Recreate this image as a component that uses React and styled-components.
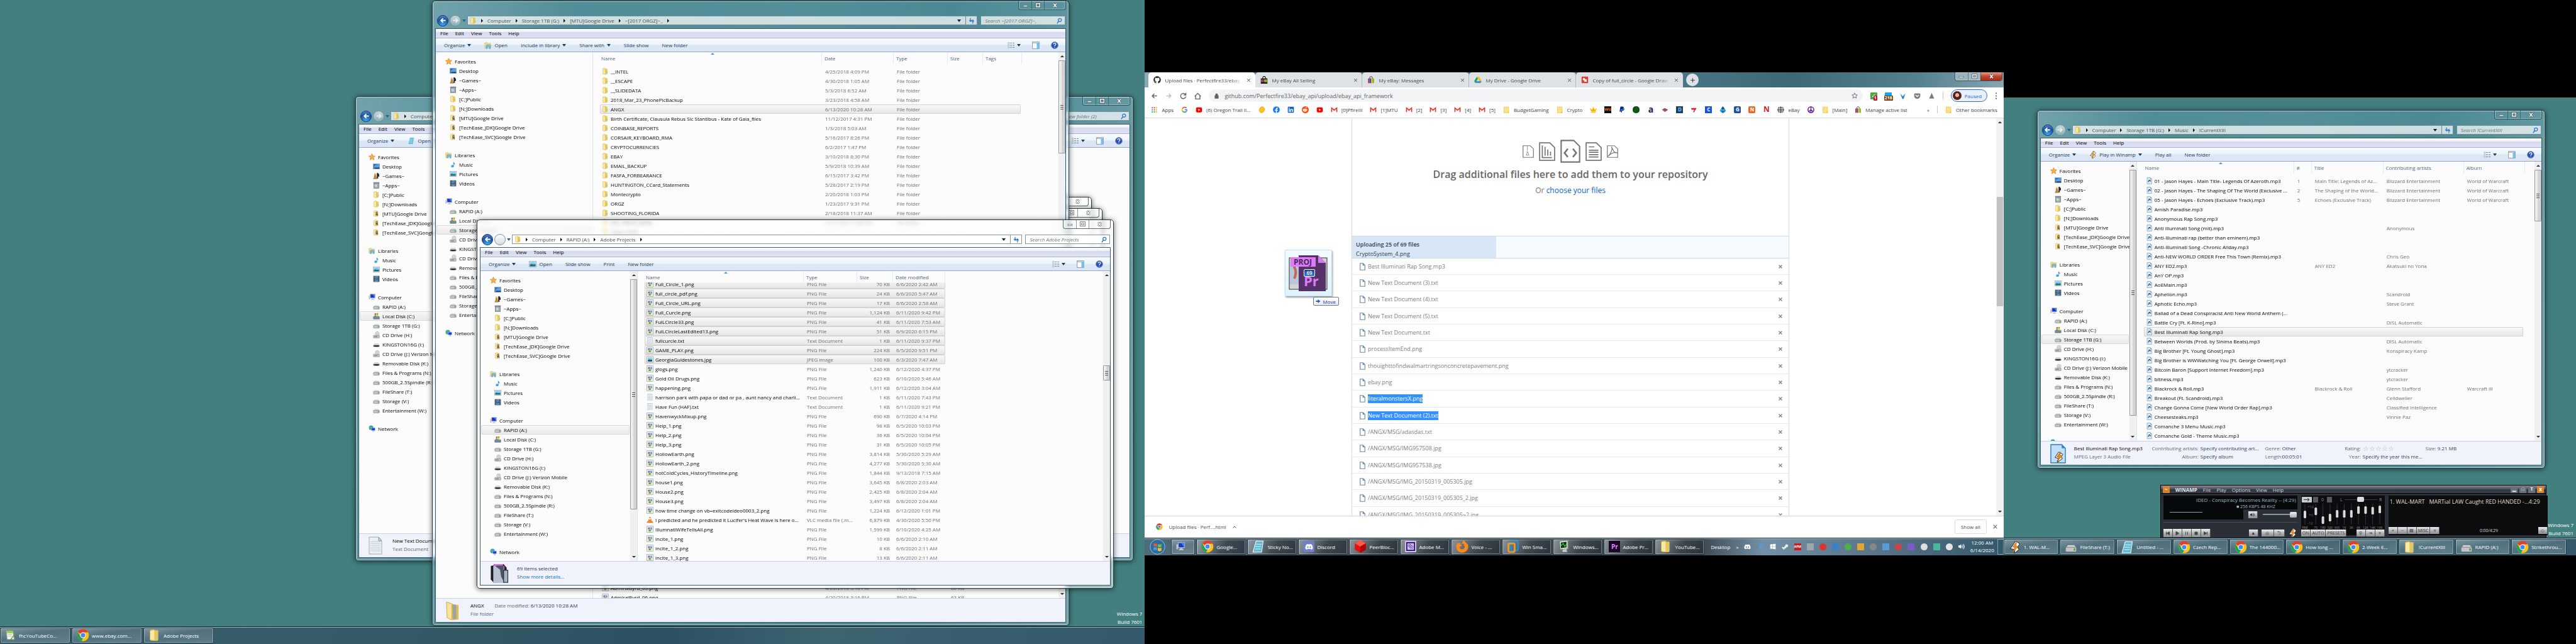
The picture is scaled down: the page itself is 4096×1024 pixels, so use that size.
import React from "react";
import styled, { createGlobalStyle, css } from "styled-components";
import {
  FaGithub, FaFacebook, FaLinkedin, FaRedditAlien, FaPaypal, FaDiscord, FaFirefoxBrowser,
  FaSteamSymbol, FaBluetoothB, FaGlobe, FaCrown, FaPeace, FaVolumeUp, FaGetPocket, FaWindows,
} from "react-icons/fa";

const Global = createGlobalStyle`
  *, *::before, *::after { box-sizing: border-box; }
  body { margin: 0; background: #000; font-family: "Open Sans", "Noto Sans", sans-serif; font-size: 8px; line-height: 15px; color: #000; overflow: hidden; }
  button, input { font: inherit; color: inherit; border: 0; padding: 0; margin: 0; background: none; }
  ul, ol, p, h1, h2, dl, dd { margin: 0; padding: 0; list-style: none; font-weight: inherit; font-size: inherit; }
  a { text-decoration: none; color: inherit; }
  svg { display: block; flex: none; }
`;

/* ---------- desktop ---------- */

const Screens = styled.main`
  display: grid;
  grid-template-columns: 4fr 3fr 2fr;
  align-items: start;
`;
const Screen = styled.section`
  position: relative;
  display: flex;
  flex-direction: column;
  justify-content: flex-end;
  aspect-ratio: ${(p) => p.$ratio};
  margin-top: ${(p) => p.$drop || 0}px;
  background: ${(p) => p.$bg || "#437f7f"};
  overflow: hidden;
`;
const BuildNote = styled.p`
  padding: 0 4px 1px;
  text-align: right;
  color: #fff;
  line-height: 13px;
  white-space: pre-line;
`;

/* ---------- icons ---------- */

const Svg = ({ w = 11, h = 11, vb = "0 0 16 16", children, ...r }) => (
  <svg width={w} height={h} viewBox={vb} aria-hidden="true" {...r}>{children}</svg>
);
const art = {
  folder: <><path d="M3 1l4-.5V2h5v13H3z" fill="#e9cf6a" /><path d="M2 2l6-1v14l-6-1z" fill="#f8e9a3" stroke="#c9a740" strokeWidth=".6" /><path d="M8 2h4.500v12L8 15z" fill="#e5c65c" /><path d="M12.500 8v4" stroke="#5aa9e6" /></>,
  drivefolder: <><path d="M2 2l6-1v14l-6-1z" fill="#f6e59b" stroke="#c9a740" strokeWidth=".6" /><path d="M8 2h4v12l-4 1z" fill="#dfc05a" /><path d="M6 5l4-1 2 10-3-3-2 3z" fill="#555" /><circle cx="8" cy="7" r="1.500" fill="#caa" /></>,
  star: <path d="M8 .8l2.100 4.900 5.200.4-4 3.400 1.300 5.300L8 12l-4.600 2.800 1.300-5.300-4-3.400 5.200-.4z" fill="#fdb03a" stroke="#d9741c" />,
  desktop: <><rect x=".5" y="2" width="15" height="12" fill="#2c6fc4" stroke="#9db4c9" /><path d="M1 11C5 4 10 3 15 3v8z" fill="#5d9fe0" /><rect x="1" y="11" width="14" height="2.500" fill="#1d3d66" /><circle cx="3" cy="12" r="1" fill="#ffb43c" /></>,
  games: <><path d="M11 1c4 3 4 5 3.500 8-1 2-2.500 1-3 1l1 4H9V2z" fill="#2a2a2a" /><circle cx="5" cy="4" r="2.200" fill="#e8b765" /><path d="M3.500 6h3l1 5 2 4H1l2-4z" fill="#c48a35" stroke="#6d4813" strokeWidth=".6" /></>,
  apps: <><rect x="2" y="3" width="12" height="12" fill="#a9adb5" stroke="#666" /><rect x="1" y="1" width="14" height="2.500" fill="#7e80ad" /><circle cx="7" cy="9" r="3.300" fill="#e7e9e7" stroke="#6a9" /><circle cx="7" cy="9" r="1" fill="#7c8" /></>,
  library: <><path d="M1 3l5-1 1 2h7v10H1z" fill="#f3dc8a" stroke="#c9a740" strokeWidth=".6" /><path d="M4 15V8.500Q4 7 5.500 7h6Q13 7 13 8.500V15h-2.500v-4h-4v4z" fill="#6cc3ee" stroke="#2d87bd" strokeWidth=".6" /></>,
  music: <><path d="M8.500 1c.5 3 5 4 3.500 8-.5-2-2-3-2.500-3v6h-1z" fill="#2d86d6" /><ellipse cx="6.500" cy="12" rx="3.200" ry="2.900" fill="#3fa3ea" /></>,
  picture: <><rect x=".5" y="2" width="15" height="12" fill="#fff" stroke="#8e9aa6" /><rect x="2" y="3.500" width="12" height="9" fill="#7cc8f0" /><path d="M2 9c4-3 6 1 12-1v4.500H2z" fill="#1c6e72" /></>,
  video: <><rect x="1" y="1" width="14" height="14" fill="#2c3640" /><rect x="4" y="1.500" width="8" height="6" fill="#3c9be0" /><rect x="4" y="8.500" width="8" height="6" fill="#3c9be0" /><path d="M5 3l6 3M5 12l6-3" stroke="#b5472f" strokeWidth="1.500" /><path d="M2.500 1v14M13.500 1v14" stroke="#dde" strokeDasharray="1.500 1.500" /></>,
  computer: <><rect x="4" y="1" width="11" height="9" fill="#1338c8" stroke="#b8bcc4" strokeWidth="1.400" /><path d="M9 1.500h5.500v8z" fill="#4f7bf0" /><rect x=".5" y="4" width="3" height="9" fill="#bfc4cc" /><path d="M7 11h5v2h2v1.500H5V13h2z" fill="#c9cdd4" /></>,
  drive: <><path d="M2 8l2-2.500h8L14.500 8z" fill="#e4e4e6" stroke="#999" strokeWidth=".5" /><rect x="1" y="8" width="14" height="6" rx="1.500" fill="#c3c4c9" stroke="#77787d" strokeWidth=".8" /><rect x="11.500" y="9.500" width="2" height="3" fill="#3aa83c" /></>,
  windrive: <><rect x="1" y="9" width="14" height="6" rx="1" fill="#6f8f93" stroke="#46595c" strokeWidth=".7" /><path d="M4 2l3.500-1v4L3.500 6z" fill="#e5562c" /><path d="M8.500 1.500L12 1v4l-3.500.5z" fill="#7ab51d" /><path d="M3.500 7l4-1v3h-4z" fill="#2a8dd4" /><path d="M8.500 6H12v3H8.500z" fill="#fbb911" /></>,
  cd: <><circle cx="10" cy="5" r="4.500" fill="#dfe1e6" stroke="#8b8d93" strokeWidth=".7" /><circle cx="10" cy="5" r="1.200" fill="#fff" stroke="#888" strokeWidth=".6" /><rect x="1" y="9" width="14" height="6" rx="1" fill="#c3c4c9" stroke="#77787d" strokeWidth=".8" /><path d="M3 12h7" stroke="#444" /></>,
  usb: <><path d="M3 6h10l2 4H1z" fill="#cfd1d4" /><path d="M1 10h14v3.500H1z" fill="#4a4b4e" /><rect x="4" y="11" width="8" height="2.500" fill="#222" /></>,
  network: <><circle cx="6" cy="6" r="5.200" fill="#2f9bd6" /><path d="M3 3c3-2 5 0 4 2s-4 1-4 4c-2-2-2-5 0-6z" fill="#57b947" /><rect x="7" y="6" width="8" height="6.500" fill="#1c3fce" stroke="#b8c4da" /><path d="M9 14.500h4.500M11 12.500v2" stroke="#8b94a5" /></>,
  png: <><rect x="1" y="1" width="14" height="14" fill="#fff" stroke="#8b8f94" /><rect x="3" y="3" width="10" height="10" fill="#8fc5f0" /><rect x="3" y="9" width="10" height="4" fill="#f0e6a0" /><path d="M5 13c0-4 2-6 5-3v3z" fill="#4fae43" /><circle cx="5.500" cy="6" r="1.800" fill="#e0502e" /><rect x="10" y="5" width="3" height="3.500" fill="#8f86cf" /></>,
  jpg: <><rect x="1" y="1" width="14" height="14" fill="#fff" stroke="#8b8f94" /><rect x="3" y="3" width="10" height="10" fill="#8fd0f5" /><path d="M3 10c3-4 5 0 10-2v5H3z" fill="#1c5f7c" /></>,
  txt: <><path d="M2.500 1h11v14h-11z" fill="#fbfcfd" stroke="#a5abb2" strokeWidth=".8" /><path d="M4 5h8M4 7.500h8M4 10h8M4 12.500h8" stroke="#8eaac0" strokeWidth=".8" /><path d="M3 1.500h10" stroke="#8b9299" strokeDasharray="1 1" /></>,
  vlc: <><path d="M7 1h2l4 11H3z" fill="#f58a1f" /><path d="M6 4.500h4l1 2.500H5z" fill="#fff" /><path d="M1.500 12h13l1 3H.5z" fill="#e3700e" /></>,
  mp3: <><path d="M3 .8h7.500L13.500 4v11.200H3z" fill="#d9edfb" stroke="#5f90b8" strokeWidth=".9" /><path d="M10.500 1v3h3z" fill="#2f84cf" /><path d="M5 10h2V6.500h3V9h1.500" fill="none" stroke="#1a1a1a" strokeWidth="1.300" /></>,
  winamp: <><path d="M9 0l5 4-3 4 2 3-6 5 1-5-6-1z" fill="#fff" stroke="#222" strokeWidth=".8" /><path d="M10 1L5 8h3l-3 7 7-8H9z" fill="#f7941d" stroke="#b65b06" strokeWidth=".6" /></>,
  chrome: <><circle cx="8" cy="8" r="7.500" fill="#fbc116" /><path d="M8 8L1.500 4.200A7.500 7.500 0 0 1 14.500 4.300L8 4.300z" fill="#e33b2e" /><path d="M1.500 4.200L5 10l3 2-2 3.300A7.500 7.500 0 0 1 1.500 4.200z" fill="#1ea362" /><circle cx="8" cy="8" r="3.600" fill="#fff" /><circle cx="8" cy="8" r="2.800" fill="#4587f3" /></>,
  google: <><path d="M3 5.500A5.800 5.800 0 0 1 12.500 4" fill="none" stroke="#ea4335" strokeWidth="2.400" /><path d="M3 5.500a5.800 5.800 0 0 0 .1 5.200" fill="none" stroke="#fbbc05" strokeWidth="2.400" /><path d="M3.100 10.700A5.800 5.800 0 0 0 12 12.200" fill="none" stroke="#34a853" strokeWidth="2.400" /><path d="M8.200 8.100h5.200c0 2-.5 3.100-1.600 4.200" fill="none" stroke="#4285f4" strokeWidth="2.300" /></>,
  ebay: <><path d="M5 6V4a3 3 0 0 1 6 0v2" fill="none" stroke="#333" strokeWidth="1.200" /><rect x="1.500" y="5" width="3.300" height="10" fill="#e53238" /><rect x="4.800" y="5" width="3.300" height="10" fill="#0064d2" /><rect x="8" y="5" width="3.300" height="10" fill="#f5af02" /><rect x="11.300" y="5" width="3.200" height="10" fill="#86b817" /></>,
  ebayblack: <><path d="M5 6V3.500a3 3 0 0 1 6 0V6" fill="none" stroke="#111" strokeWidth="1.400" /><rect x="1" y="5" width="14" height="11" fill="#111" /><path d="M1.500 7h4v6h-4z" fill="#e53238" /><path d="M5.500 7h3v6h-3z" fill="#0064d2" /><path d="M8.500 7h3v6h-3z" fill="#f5af02" /><path d="M11.500 7h3v6h-3z" fill="#86b817" /></>,
  gdrive: <><path d="M5.500 1.500h5L16 10.500h-5z" fill="#fbbc05" /><path d="M5.500 1.500L8 6 2.700 14.800 0 10.500z" fill="#1da462" /><path d="M5 10.500h11l-2.600 4.300H2.700z" fill="#4688f4" /></>,
  drawing: <><rect x="1" y="1" width="14" height="14" rx="1.500" fill="#db4437" /><circle cx="6" cy="6.500" r="2.400" fill="#fff" /><rect x="7" y="7" width="5" height="5" fill="#fff" /></>,
  gmail: <><rect x="1" y="3" width="14" height="10.500" fill="#eee" /><path d="M2 13.500V3.800l6 5.200 6-5.200v9.700" fill="none" stroke="#d93a2b" strokeWidth="2.200" /></>,
  bookfolder: <><rect x="2" y="1.500" width="11" height="13.500" fill="#fbe08a" stroke="#eac54f" /><path d="M13 11v4h-3" fill="#e9b92c" /></>,
  youtube: <><rect x="1" y="2.500" width="14" height="11.500" rx="3" fill="#f00" /><path d="M6.500 5.500l4 2.700-4 2.700z" fill="#fff" /></>,
  gold: <ellipse cx="8" cy="8" rx="6" ry="7" fill="#fcc419" stroke="#e59b0a" transform="rotate(25 8 8)" />,
  apps9: <g>{[2, 6.800, 11.600].map((y, j) => [2, 6.800, 11.600].map((x, i) => <rect key={x + "-" + y} x={x} y={y} width="2.800" height="2.800" fill={["#ea4335", "#ea4335", "#fbbc05", "#34a853", "#4285f4", "#fbbc05", "#34a853", "#34a853", "#fbbc05"][j * 3 + i]} />))}</g>,
  diamond: <><path d="M8 0l4 5-4 4-4-4z" fill="#1a4f9c" /><path d="M4 5l4 5-4 4-3-4zM12 5l3 5-3 4-4-4z" fill="#17a7e0" /><path d="M8 9l4 4-4 3-4-3z" fill="#0d6fb8" /></>,
  flag: <><path d="M1 8l6-4 8 4-7 5z" fill="#d63a3a" /><path d="M2 8l6-3 3 2-6 4z" fill="#3c6fc4" /></>,
  seven: <path d="M2 4h12L8 14l-2-1 3-5H2z" fill="#d8232a" />,
  gem: <><path d="M8 0l7 4v8l-7 4-7-4V4z" fill="#e0140f" /><path d="M8 0l7 4-7 4-7-4z" fill="#ff5a4c" /><path d="M8 8v8l7-4V4z" fill="#a80a08" /></>,
  monitor: <><path d="M2 1l11-1v11L3 12z" fill="#d6dad2" stroke="#777" /><path d="M4 3l7-1v7l-7 1z" fill="#062b0b" /><path d="M4 7l3-3 2 4 2-3" stroke="#25e03f" fill="none" /><path d="M6 12l5-1 1 4H6z" fill="#c4c7c0" /></>,
  vm: <><rect x="5" y="1" width="9" height="12" rx="2" fill="none" stroke="#1d92d0" strokeWidth="2" /><rect x="2" y="4" width="8" height="11" rx="2" fill="none" stroke="#f59a1b" strokeWidth="2.200" /></>,
  note: <><path d="M5 1h9l-2 14H1z" fill="#5fb9d6" stroke="#dff3f8" /><path d="M5 5h7M4 8h7M4 11h7" stroke="#c9ecf5" /></>,
  editor: <><path d="M2 2h9l2 12H3z" fill="#f4f6f2" stroke="#9aa49a" /><path d="M2 2h9l.5 3h-9z" fill="#8fd14a" /><path d="M4 7h6M4 9.500h6" stroke="#b9c4b4" /><path d="M15 4L8 13l-1 2 2-1 6-9z" fill="#5aa02c" /></>,
  orb: <><circle cx="8" cy="8" r="7.500" fill="#2a6ca3" stroke="#9cc6e0" strokeWidth=".6" /><path d="M4 5c1-.8 2-.8 3.500 0v3C6 7.200 5 7.200 4 8z" fill="#ef5a28" /><path d="M8.300 5.200c1.200.6 2.500.6 3.700-.2v3c-1.200.8-2.500.8-3.700.2z" fill="#82bc23" /><path d="M4 8.800c1-.8 2-.8 3.500 0v3c-1.500-.8-2.500-.8-3.500 0z" fill="#3aa0e0" /><path d="M8.300 9c1.200.6 2.500.6 3.700-.2v3c-1.200.8-2.500.8-3.700.2z" fill="#fcc318" /></>,
};
const Icon = ({ n, s = 11, h }) => <Svg w={s} h={h || s}>{art[n]}</Svg>;

const TileBox = styled.span`
  display: grid;
  place-items: center;
  flex: none;
  width: ${(p) => p.$s || 11}px;
  height: ${(p) => p.$s || 11}px;
  border-radius: ${(p) => p.$r || 0}px;
  background: ${(p) => p.$bg};
  color: ${(p) => p.$fg || "#fff"};
  font-size: ${(p) => p.$f || 8}px;
  font-weight: 700;
  line-height: 10px;
`;

/* ---------- explorer ---------- */

const glass = css`
  background:
    linear-gradient(100deg, rgba(255,255,255,.22) 0, rgba(255,255,255,.03) 20%, rgba(255,255,255,.06) 45%, rgba(255,255,255,0) 70%, rgba(255,255,255,.2) 100%),
    rgba(110,190,255,.17);
  backdrop-filter: blur(3px);
`;
const Frame = styled.article`
  position: absolute;
  inset: ${(p) => p.$inset};
  display: flex;
  flex-direction: column;
  padding: 0 4px 4px;
  border: 1px solid #23393f;
  border-radius: 5px;
  box-shadow: inset 0 0 0 1px rgba(255,255,255,.55), 0 1px 8px rgba(0,0,0,.6);
  ${glass}
  ${(p) => p.$pale && css`background: linear-gradient(100deg, rgba(255,255,255,.75), rgba(255,255,255,.4) 30%, rgba(255,255,255,.5));`}
`;
const TitleBar = styled.header`
  flex: none;
  display: flex;
  justify-content: flex-end;
  height: 23px;
`;
const Caption = styled.div`
  display: flex;
  height: 14px;
  border: 1px solid rgba(35,57,63,.75);
  border-top: 0;
  border-radius: 0 0 4px 4px;
  box-shadow: inset 0 0 0 1px rgba(255,255,255,.35);
  overflow: hidden;
`;
const CaptionButton = styled.button`
  display: grid;
  place-items: center;
  width: ${(p) => (p.$wide ? 34 : 20)}px;
  background: ${(p) => (p.$red ? "linear-gradient(#e0a08f, #c0452c 50%, #a82a12)" : "transparent")};
  & + & { border-left: 1px solid rgba(35,57,63,.5); }
`;
const WindowButtons = ({ red }) => (
  <Caption>
    <CaptionButton aria-label="Minimize"><Svg w={9} h={9}><rect x="2" y="8" width="12" height="4" fill="#fff" stroke="#4a5258" /></Svg></CaptionButton>
    <CaptionButton aria-label="Maximize"><Svg w={9} h={9}><rect x="3" y="3" width="10" height="9" fill="none" stroke="#4a5258" strokeWidth="5" /><rect x="3" y="3" width="10" height="9" fill="none" stroke="#fff" strokeWidth="2.500" /></Svg></CaptionButton>
    <CaptionButton aria-label="Close" $wide $red={red}><Svg w={9} h={9}><path d="M4 3l8 10M12 3L4 13" stroke="#4a5258" strokeWidth="5" /><path d="M4 3l8 10M12 3L4 13" stroke="#fff" strokeWidth="2.600" /></Svg></CaptionButton>
  </Caption>
);
const NavRow = styled.nav`
  flex: none;
  display: flex;
  align-items: center;
  gap: 2px;
  height: 15px;
  margin-bottom: 5px;
  padding: 0 1px 0 3px;
`;
const RoundButton = styled.button`
  display: grid;
  place-items: center;
  width: 18px;
  height: 18px;
  border-radius: 50%;
  border: 1px solid ${(p) => (p.$on ? "#16376b" : "#7c8d94")};
  background: ${(p) => (p.$on ? "radial-gradient(circle at 50% 100%, #3fb4f5, #1c50a8 60%, #6f95cc)" : "linear-gradient(rgba(255,255,255,.6), rgba(170,190,198,.5))")};
  flex: none;
`;
const Arrow = ({ dim }) => <Svg w={11} h={11}><path d="M14 8H4M8 3L3 8l5 5" fill="none" stroke={dim ? "#e6ecee" : "#fff"} strokeWidth="2.600" transform={dim ? "rotate(180 8 8)" : undefined} /></Svg>;
const Caret = styled.i`
  flex: none;
  width: 0;
  height: 0;
  border: 3px solid transparent;
  border-bottom-width: 0;
  border-top: 4px solid ${(p) => p.$c || "#1e3c5c"};
`;
const Crumb = styled.i`
  flex: none;
  border: 3px solid transparent;
  border-right-width: 0;
  border-left: 3px solid #111;
`;
const Address = styled.div`
  flex: 1;
  display: flex;
  align-items: center;
  gap: 7px;
  height: 15px;
  padding-left: 3px;
  border: 1px solid rgba(70,95,105,.65);
  background: rgba(255,255,255,.72);
  color: #464e52;
  overflow: hidden;
  white-space: nowrap;
`;
const Refresh = styled.button`
  display: grid;
  place-items: center;
  width: 18px;
  align-self: stretch;
  border-left: 1px solid rgba(70,95,105,.65);
`;
const SearchBox = styled.label`
  display: flex;
  align-items: center;
  width: ${(p) => p.$w}px;
  height: 15px;
  margin-left: 3px;
  padding: 0 4px 0 6px;
  border: 1px solid rgba(70,95,105,.65);
  background: rgba(255,255,255,.72);
  input { flex: 1; min-width: 0; outline: 0; }
  input::placeholder { color: #687276; font-style: italic; opacity: 1; }
`;
const Client = styled.div`
  flex: 1;
  min-height: 0;
  display: flex;
  flex-direction: column;
  border: 1px solid #3b5c66;
  background: #fcfcfc;
  overflow: hidden;
`;
const MenuBar = styled.div`
  flex: none;
  display: flex;
  gap: 11px;
  height: 15px;
  padding-left: 7px;
  line-height: 14px;
  border-bottom: 1px solid #a9b1d3;
  background: linear-gradient(#fff, #eceef8 35%, #d5daee 40%, #dfe3f4);
`;
const ToolBar = styled.div`
  flex: none;
  display: flex;
  align-items: center;
  gap: 21px;
  height: 22px;
  padding: 0 11px 0 13px;
  color: #1e3c5c;
  border-bottom: 1px solid #95aac9;
  background: linear-gradient(#fafcff, #eaf3fb 48%, #dce7f5 52%, #dbe5f5);
`;
const Tool = styled.button`
  display: flex;
  align-items: center;
  gap: 4px;
  white-space: nowrap;
`;
const ToolEnd = styled.div`
  display: flex;
  align-items: center;
  gap: 18px;
  margin-left: auto;
`;
const Body = styled.div`
  flex: 1;
  min-height: 0;
  display: flex;
`;
const Sidebar = styled.aside`
  flex: none;
  display: flex;
  width: ${(p) => p.$w}px;
  border-right: 1px solid #d9e4f2;
  overflow: hidden;
`;
const Tree = styled.div`
  flex: 1;
  min-width: 0;
  padding-top: 7px;
  overflow: hidden;
  white-space: nowrap;
`;
const Group = styled.ul`
  margin-bottom: 14px;
`;
const Node = styled.li`
  display: flex;
  align-items: center;
  gap: 4px;
  height: 15px;
  padding-left: ${(p) => (p.$child ? 21 : 14)}px;
  margin: 0 1px;
  border-radius: 2px;
  ${(p) => p.$on && css`
    background: linear-gradient(#f8f8f8, #e9e9e9);
    box-shadow: inset 0 0 0 1px #d9d9d9;
  `}
`;
const Track = styled.div`
  flex: none;
  display: flex;
  flex-direction: column;
  align-items: center;
  width: ${(p) => p.$w || 11}px;
  background: #f0f0f0;
`;
const TrackEnd = styled.i`
  flex: none;
  display: grid;
  place-items: center;
  height: 13px;
`;
const Thumb = styled.i`
  flex: none;
  display: grid;
  place-items: center;
  align-self: stretch;
  height: ${(p) => p.$h};
  margin-top: ${(p) => p.$at || 0};
  border: 1px solid #979797;
  border-radius: 1px;
  background: linear-gradient(90deg, #f5f5f5, #e6e6e6 45%, #cfcfcf 55%, #d9d9d9);
  &::before { content: ""; width: 5px; height: 7px; background: repeating-linear-gradient(#555 0 1px, transparent 1px 3px); }
`;
const Spring = styled.i` flex: 1; `;
const UpTri = styled.i`border: 3px solid transparent; border-top: 0; border-bottom: 3px solid #333;`;
const DownTri = styled.i`border: 3px solid transparent; border-bottom: 0; border-top: 3px solid #333;`;
const Scroll = ({ at, h }) => (
  <Track><TrackEnd><UpTri /></TrackEnd><Thumb $at={at} $h={h} /><Spring /><TrackEnd><DownTri /></TrackEnd></Track>
);
const ListPane = styled.div`
  flex: 1;
  min-width: 0;
  display: flex;
  padding-left: 11px;
  overflow: hidden;
`;
const Table = styled.table`
  flex: 1;
  min-width: 0;
  display: flex;
  flex-direction: column;
  overflow: hidden;
  thead { display: block; flex: none; }
  tbody { display: block; flex: 1; min-height: 0; overflow: hidden; }
  tr { display: grid; grid-template-columns: ${(p) => p.$cols}; justify-content: start; height: 15px; }
  thead tr { height: 18px; }
  tbody tr:first-child { margin-top: ${(p) => (p.$scrolled ? -5 : 5)}px; }
`;
const Head = styled.th`
  position: relative;
  padding: 0 0 0 4px;
  text-align: left;
  font-weight: 400;
  line-height: 19px;
  color: #4c607a;
  border-right: 1px solid #e1ebf6;
  &:first-child { padding-left: 2px; }
`;
const SortMark = styled(UpTri)`
  position: absolute;
  top: 1px;
  left: 50%;
  border-bottom-color: #5c93bd;
`;
const Row = styled.tr`
  ${(p) => p.$on && css`
    width: ${p.$span}px;
    border-radius: 2px;
    background: linear-gradient(#f9f9f9, #e5e5e5);
    box-shadow: inset 0 0 0 1px #d3d3d3;
  `}
`;
const Cell = styled.td`
  padding: 0 ${(p) => (p.$right ? 5 : 0)}px 0 5px;
  min-width: 0;
  line-height: 15px;
  color: #6d6d6d;
  white-space: nowrap;
  overflow: hidden;
  text-align: ${(p) => (p.$right ? "right" : "left")};
`;
const NameCell = styled(Cell)`
  display: flex;
  align-items: center;
  gap: 3px;
  padding: 0 0 0 3px;
  color: #000;
`;
const Gap = styled.tr`
  && { height: ${(p) => p.$h}px; }
`;
const Details = styled.footer`
  flex: none;
  display: flex;
  gap: ${(p) => p.$gap}px;
  height: 38px;
  padding: 4px 15px;
  border-top: 1px solid #c6d3e6;
  background: #f0f3fb;
  line-height: 13px;
  color: #5a6779;
`;
const DetailText = styled.div`
  display: flex;
  flex-direction: column;
  white-space: nowrap;
  strong { font-weight: 400; color: #000; }
  em { font-style: normal; color: #1e395b; }
  a { color: #1470b0; }
`;
const DetailLine = styled.p`
  display: flex;
  gap: ${(p) => p.$gap || 4}px;
`;
const Facts = styled.dl`
  display: grid;
  grid-template-columns: 76px 100px 24px 96px 26px 97px 16px 1fr;
  column-gap: 3px;
  grid-auto-rows: 13px;
  white-space: nowrap;
  dt { text-align: right; }
  dd { color: #1e395b; }
`;
const Stars = styled.dd`
  && { color: #b9c0cb; font-size: 11px; }
`;

const favorites = [["desktop", "Desktop"], ["games", "~Games~"], ["apps", "~Apps~"], ["folder", "[C;]Public"], ["folder", "[N;]Downloads"], ["drivefolder", "[MTU]Google Drive"], ["drivefolder", "[TechEase_JDK]Google Drive"], ["drivefolder", "[TechEase_SVC]Google Drive"]];
const libraries = [["music", "Music"], ["picture", "Pictures"], ["video", "Videos"]];
const drives = [["drive", "RAPID (A:)"], ["windrive", "Local Disk (C:)"], ["drive", "Storage 1TB (G:)"], ["cd", "CD Drive (H:)"], ["usb", "KINGSTON16G (I:)"], ["cd", "CD Drive (J:) Verizon Mobile"], ["usb", "Removable Disk (K:)"], ["drive", "Files & Programs (N:)"], ["drive", "500GB_2.5Spindle (R:)"], ["drive", "FileShare (T:)"], ["drive", "Storage (V:)"], ["drive", "Entertainment (W:)"]];
const groups = [["star", "Favorites", favorites], ["library", "Libraries", libraries], ["computer", "Computer", drives], ["network", "Network", []]];

const FileTree = ({ selected }) => (
  <Tree>
    {groups.map(([icon, name, items]) => (
      <Group key={name}>
        <Node><Icon n={icon} />{name}</Node>
        {items.map(([i, label]) => <Node key={label} $child $on={label === selected}><Icon n={i} />{label}</Node>)}
      </Group>
    ))}
  </Tree>
);

function Explorer({ inset, pale, path, leaf, search, searchWidth = 135, tools, sidebar = 250, treeScroll, selected, children, footer }) {
  return (
    <Frame $inset={inset} $pale={pale}>
      <TitleBar><WindowButtons /></TitleBar>
      <NavRow>
        <RoundButton $on aria-label="Back"><Arrow /></RoundButton>
        <RoundButton aria-label="Forward"><Arrow dim /></RoundButton>
        <Caret $c="#2a5d9a" />
        <Address>
          <Icon n="folder" />
          {path.map((p) => <React.Fragment key={p}><Crumb /><button>{p}</button></React.Fragment>)}
          {!leaf && <Crumb />}
          <Spring />
          <Caret $c="#001a4d" />
          <Refresh aria-label="Refresh"><Svg w={10} h={10}><path d="M5 1v8M2 6l3 4 3-4M11 15V7M8 10l3-4 3 4" fill="none" stroke="#2f77c9" strokeWidth="2" /></Svg></Refresh>
        </Address>
        <SearchBox $w={searchWidth}>
          <input aria-label={search} placeholder={search} />
          <Svg w={10} h={10}><circle cx="10" cy="6" r="4" fill="none" stroke="#2f77c9" strokeWidth="2" /><path d="M7 9l-4 6" stroke="#2f77c9" strokeWidth="2.400" /></Svg>
        </SearchBox>
      </NavRow>
      <Client>
        <MenuBar>{["File", "Edit", "View", "Tools", "Help"].map((m) => <button key={m}>{m}</button>)}</MenuBar>
        <ToolBar>
          {tools.map(([label, caret, icon]) => (
            <Tool key={label}>{icon && <Icon n={icon} s={12} />}{label}{caret && <Caret />}</Tool>
          ))}
          <ToolEnd>
            <Tool aria-label="Change your view"><Svg w={11} h={11}><path d="M1 2h3v3H1zM1 7h3v3H1zM1 12h3v3H1z" fill="none" stroke="#9bb" /><path d="M6 3.500h4M12 3.500h4M6 8.500h4M12 8.500h4M6 13.500h4M12 13.500h4" stroke="#3a4a5c" /></Svg><Caret /></Tool>
            <Tool aria-label="Preview pane"><Svg w={12} h={12}><rect x="1" y="1" width="14" height="14" fill="#fff" stroke="#6a7a8c" /><path d="M1 3h14" stroke="#6a7a8c" /><rect x="10" y="3" width="5" height="12" fill="#6fc2ea" /></Svg></Tool>
            <Tool aria-label="Help"><Svg w={12} h={12}><circle cx="8" cy="8" r="7.300" fill="#2450b8" stroke="#8c98ab" strokeWidth="1.200" /><path d="M5.500 6q0-2.500 2.500-2.500T10.500 6q0 1.300-2.500 3v1M8 11.500v1.500" fill="none" stroke="#fff" strokeWidth="1.700" /></Svg></Tool>
          </ToolEnd>
        </ToolBar>
        <Body>
          <Sidebar $w={sidebar}>
            <FileTree selected={selected} />
            {treeScroll && <Scroll h={treeScroll} />}
          </Sidebar>
          {children}
        </Body>
        {footer}
      </Client>
    </Frame>
  );
}

const FileTable = ({ cols, span, heads, rows, rightCol, scrolled, scroll }) => (
  <ListPane>
    <Table $cols={cols} $scrolled={scrolled}>
      <thead><tr>{heads.map((h, i) => <Head key={h} scope="col">{h}{i === 0 && <SortMark />}</Head>)}</tr></thead>
      <tbody>
        {rows.map((r, k) => r.gap ? <Gap key={k} $h={r.gap}><td /></Gap> : (
          <Row key={k} $on={r.on} $span={span}>
            <NameCell><Icon n={r.icon} /><span>{r.cells[0]}</span></NameCell>
            {r.cells.slice(1).map((c, i) => <Cell key={i} $right={i + 1 === rightCol}>{c}</Cell>)}
          </Row>
        ))}
      </tbody>
    </Table>
    {scroll}
  </ListPane>
);

const orgRows = [
  ["__INTEL", "4/25/2018 4:09 PM"], ["__ESCAPE", "4/30/2018 1:05 AM"], ["__SLIDEDATA", "5/3/2018 6:52 AM"],
  ["2018_Mar_23_PhonePicBackup", "3/23/2018 4:58 AM"], ["ANGX", "6/13/2020 10:28 AM", true],
  ["Birth Certificate, Clausula Rebus Sic Stantibus - Kate of Gaia_files", "11/12/2017 4:31 PM"],
  ["COINBASE_REPORTS", "1/3/2018 5:03 AM"], ["CORSAIR_KEYBOARD_RMA", "5/16/2017 8:26 PM"],
  ["CRYPTOCURRENCIES", "6/2/2017 1:47 PM"], ["EBAY", "3/10/2018 8:30 PM"], ["EMAIL_BACKUP", "5/9/2018 10:39 AM"],
  ["FASFA_FORBEARANCE", "6/15/2017 3:42 PM"], ["HUNTINGTON_CCard_Statements", "5/28/2017 2:19 PM"],
  ["Montecrypto", "2/20/2018 1:03 PM"], ["ORGZ", "1/23/2017 9:31 PM"], ["SHOOTING_FLORIDA", "2/18/2018 11:37 AM"],
  ["SDL_TRUST_DATA", "11/11/2017 9:58 PM"], ["Taxes_2018", ""],
].map(([n, d, on]) => ({ icon: "folder", on, cells: [n, d, d && "File folder", "", ""] })).concat([
  { gap: 551 },
  { icon: "png", cells: ["AdmiralByrd_05.png", "4/20/2018 3:16 PM", "PNG File", "80 KB", ""] },
  { icon: "png", cells: ["AdmiralByrd_06.png", "4/20/2018 3:16 PM", "PNG File", "63 KB", ""] },
]);

const fileKinds = { png: ["png", "PNG File"], txt: ["txt", "Text Document"], jpg: ["jpg", "JPEG image"], vlc: ["vlc", "VLC media file (.m..."] };
const adobeRows = [
  "Full_Circle_1.png|70|6/6/2020 2:42 AM", "full_circle_pdf.png|24|6/6/2020 5:47 AM", "Full_Circle_URL.png|17|6/6/2020 2:58 AM",
  "Full_Curcle.png|1,124|6/11/2020 9:42 PM", "FulLCircle33.png|41|6/11/2020 7:53 AM", "FulLCircleLastEdited13.png|51|6/9/2020 6:15 PM",
  "fullcurcle.txt|1|6/11/2020 9:37 PM|txt", "GAME_PLAY.png|224|6/5/2020 9:51 PM", "GeorgiaGuidestones.jpg|100|6/3/2020 7:47 AM|jpg",
  "glogs.png|1,240|6/12/2020 4:37 PM", "Gold Oil Drugs.png|623|6/10/2020 5:46 AM", "happening.png|1,911|6/12/2020 3:04 AM",
  "harrison park with papa or dad or pa , aunt nancy and charli...|1|6/11/2020 7:43 PM|txt", "Have Fun (HAF).txt|1|6/11/2020 9:21 PM|txt",
  "HavenwyckMixup.png|690|6/7/2020 4:14 PM", "Help_1.png|98|6/5/2020 10:03 PM", "Help_2.png|36|6/5/2020 10:04 PM", "Help_3.png|31|6/5/2020 10:05 PM",
  "HollowEarth.png|3,814|5/30/2020 5:29 AM", "HollowEarth_2.png|4,277|5/30/2020 5:30 AM", "hotColdCycles_HistoryTImeline.png|1,844|9/13/2018 7:15 AM",
  "house1.png|3,645|6/8/2020 2:03 AM", "House2.png|2,425|6/8/2020 2:04 AM", "House3.png|3,497|6/8/2020 2:04 AM",
  "how time change on vb=exitcodeideo0003_2.png|1,224|6/12/2020 1:01 PM", "I predicted and he predicted it Lucifer's Heat Wave is here o...|6,879|4/30/2020 5:50 PM|vlc",
  "IllumnatiWifeTellsAll.png|1,599|6/10/2020 4:25 AM", "incite_1.png|10|6/6/2020 2:10 AM", "incite_1_2.png|8|6/6/2020 2:11 AM", "incite_1_3.png|13|6/6/2020 2:11 AM",
].map((line, i) => {
  const [n, kb, d, kind = "png"] = line.split("|");
  const [icon, type] = fileKinds[kind];
  return { icon, on: i < 9, cells: [n, type, kb + " KB", d] };
});

const musicRows = [
  "01 - Jason Hayes - Main Title- Legends Of Azeroth.mp3|1|Main Title: Legends of Az...|Blizzard Entertainment|World of Warcraft",
  "02 - Jason Hayes - The Shaping Of The World (Exclusive ...|2|The Shaping of the World...|Blizzard Entertainment|World of Warcraft",
  "05 - Jason Hayes - Echoes (Exclusive Track).mp3|5|Echoes (Exclusive Track)|Blizzard Entertainment|World of Warcraft",
  "Amish Paradise.mp3", "Anonymous Rap Song.mp3", "Anti Illuminati Song (mit).mp3|||Anonymous", "Anti-Illuminati rap (better than eminem).mp3",
  "Anti-Illuminati Song -Chronic Allday.mp3", "Anti-NEW WORLD ORDER Free This Town (Remix).mp3|||Chris Geo", "ANY ED2.mp3||ANY ED2|Akatsuki no Yona",
  "AnY OP.mp3", "AoEMain.mp3", "Aphelion.mp3|||Scandroid", "Aphotic Echo.mp3|||Steve Grant", "Ballad of a Dead Conspiracist Anti New World Anthem (...",
  "Battle Cry [Ft. K-Rino].mp3|||DISL Automatic", "Best Illuminati Rap Song.mp3", "Between Worlds (Prod. by Sinima Beats).mp3|||DISL Automatic",
  "Big Brother [Ft. Young Ghost].mp3|||Konspiracy Kamp", "Big Brother is WWWatching You [Ft. George Orwell].mp3", "Bitcoin Baron [Support Internet Freedom].mp3|||ytcracker",
  "bitness.mp3|||ytcracker", "Blackrock & Roll.mp3||Blackrock & Roll|Glenn Stafford|Warcraft III", "Breakout (Ft. Scandroid).mp3|||Celldweller",
  "Change Gonna Come [New World Order Rap].mp3|||Classified Intelligence", "Cheesesteaks.mp3|||Vinnie Paz", "Comanche 3 Menu Music.mp3", "Comanche Gold - Theme Music.mp3", "Comanche Gold.mp3",
].map((line, i) => {
  const c = line.split("|");
  return { icon: "mp3", on: i === 16, cells: [0, 1, 2, 3, 4].map((k) => c[k] || "") };
});

/* ---------- task bars ---------- */

const TaskBar = styled.footer`
  position: relative;
  flex: none;
  display: flex;
  gap: 2px;
  height: 28px;
  padding: 1px 0;
  padding-right: ${(p) => p.$end || 0}px;
  border-top: 1px solid #10242c;
  box-shadow: inset 0 1px 0 rgba(220,240,250,.6);
  background: ${(p) => p.$bg || "linear-gradient(100deg, #3b606e, #335967 40%, #2c5261 58%, #3d6471 72%, #34596a)"};
  color: #fff;
`;
const TaskButton = styled.button`
  flex: ${(p) => (p.$w ? "none" : "1 1 0")};
  min-width: 0;
  width: ${(p) => (p.$w ? p.$w + "px" : "auto")};
  display: flex;
  align-items: center;
  gap: 4px;
  padding: 0 4px 0 7px;
  border: 1px solid rgba(10,30,40,.7);
  border-radius: 2px;
  box-shadow: inset 0 0 0 1px rgba(255,255,255,.35);
  background: ${(p) => (p.$dark ? "linear-gradient(120deg, rgba(255,255,255,.4), rgba(60,66,72,.75) 55%, rgba(30,36,44,.6))" : "linear-gradient(170deg, rgba(255,255,255,.35), rgba(255,255,255,.12) 45%, rgba(255,255,255,.2))")};
  span { white-space: nowrap; }
`;
const StartButton = styled.button`
  flex: none;
  display: grid;
  place-items: center;
  width: 40px;
`;
const Tray = styled.div`
  flex: 1;
  display: flex;
  align-items: center;
  justify-content: space-between;
  padding: 0 3px 0 8px;
`;
const Clock = styled.time`
  text-align: center;
  line-height: 12px;
  white-space: pre-line;
`;
const ShowDesktop = styled.button`
  align-self: stretch;
  width: 10px;
  border: 1px solid rgba(200,225,235,.5);
`;

/* ---------- browser ---------- */

const Browser = styled.article`
  flex: 1;
  min-height: 0;
  display: flex;
  flex-direction: column;
  background: #fff;
`;
const TabStrip = styled.header`
  flex: none;
  display: flex;
  height: 24px;
  padding-left: 6px;
  background: linear-gradient(100deg, #8fa9b6 0, #4f7e8e 12%, #4f7e8e 55%, #3d6878 75%, #55818f 90%, #86a5b3);
`;
const Tab = styled.div`
  display: flex;
  align-items: center;
  gap: 6px;
  width: 170px;
  padding: 0 7px 0 8px;
  border-radius: 5px 5px 0 0;
  color: #45494d;
  background: ${(p) => (p.$on ? "#fff" : "#dee1e6")};
  box-shadow: ${(p) => (p.$line ? "inset -1px 0 0 #b4b8be" : "none")};
  button:first-of-type { flex: 1; text-align: left; overflow: hidden; white-space: nowrap; mask-image: linear-gradient(90deg, #000 85%, transparent); }
`;
const NewTab = styled.button`
  display: grid;
  place-items: center;
  width: 20px;
  height: 20px;
  margin: 2px auto 0 5px;
  border-radius: 50%;
  background: #dee1e6;
`;
const CaptionHolder = styled.div`
  padding-right: 2px;
  button { background-color: rgba(255,255,255,.3); }
`;
const Cross = ({ s = 7, c = "#3c4043", w = 2.2 }) => <Svg w={s} h={s}><path d="M3 3l10 10M13 3L3 13" stroke={c} strokeWidth={w} /></Svg>;
const BrowserBar = styled.nav`
  flex: none;
  display: flex;
  align-items: center;
  gap: 12px;
  height: 26px;
  padding: 0 10px;
  color: #5f6368;
`;
const Omnibox = styled.label`
  flex: 1;
  display: flex;
  align-items: center;
  gap: 8px;
  height: 20px;
  padding: 0 8px 0 8px;
  border-radius: 10px;
  background: #f1f3f4;
  font-size: 9px;
  input { flex: 1; outline: 0; color: #5f6368; }
`;
const Ext = styled.button`
  position: relative;
  display: grid;
  place-items: center;
  width: 11px;
  height: 12px;
`;
const Count = styled.span`
  position: absolute;
  left: ${(p) => (p.$wide ? -1 : 5)}px;
  top: 6px;
  padding: 0 1px;
  border-radius: 1px;
  background: ${(p) => p.$bg};
  color: #fff;
  font-size: 7px;
  font-weight: 700;
  line-height: 8px;
`;
const Profile = styled.button`
  display: flex;
  align-items: center;
  gap: 5px;
  width: 58px;
  height: 20px;
  padding-left: 2px;
  border: 1px solid #2a6bd0;
  border-radius: 10px;
  background: #e9f0fc;
  color: #2a6bd0;
`;
const Divider = styled.i`
  width: 1px;
  height: 12px;
  background: #c4c8cc;
`;
const Bookmarks = styled.nav`
  flex: none;
  display: flex;
  align-items: center;
  gap: 12px;
  height: 23px;
  padding: 0 10px 4px;
  color: #3c4043;
  border-bottom: 1px solid #d5d8dc;
`;
const Mark = styled.a`
  display: flex;
  align-items: center;
  gap: 6px;
  white-space: nowrap;
  margin-left: ${(p) => (p.$push ? "auto" : 0)};
`;
const Page = styled.div`
  flex: 1;
  min-height: 0;
  display: flex;
`;
const Column = styled.div`
  flex: 1;
  display: flex;
  justify-content: center;
`;
const Uploader = styled.div`
  width: 696px;
  border: 1px solid #d6d9dd;
  border-width: 0 1px;
  overflow: hidden;
`;
const DropArea = styled.section`
  display: flex;
  flex-direction: column;
  align-items: center;
  height: 187px;
  padding-top: 34px;
  text-align: center;
`;
const DropIcons = styled.div`
  display: flex;
  align-items: center;
  gap: 8px;
  margin-bottom: 6px;
`;
const DropTitle = styled.h1`
  && { font-size: 16px; font-weight: 600; }
  line-height: 24px;
  color: #666;
`;
const DropHint = styled.p`
  && { font-size: 12px; }
  margin-top: 2px;
  line-height: 24px;
  color: #767676;
  a { color: #0b5fd0; }
`;
const Progress = styled.section`
  height: 36px;
  padding: 5px 6px 0;
  border: 1px solid #cdd9e8;
  border-width: 1px 0;
  background: linear-gradient(90deg, #d8e6f5 33%, #f6fbff 33%);
  color: #2f3f50;
  font-size: 9px;
  line-height: 15px;
  strong { display: block; font-weight: 600; }
`;
const FileRow = styled.li`
  display: flex;
  align-items: center;
  gap: 4px;
  height: 26px;
  padding: 0 9px 0 12px;
  border-bottom: 1px solid #e6e8ea;
  font-size: 9px;
  color: #808080;
  &:nth-child(3n) { height: 27px; }
  button { margin-left: auto; }
`;
const Picked = styled.span`
  line-height: 14px;
  ${(p) => p.$on && css`background: #3390ff; color: #fff;`}
`;
const PageTrack = styled.div`
  flex: none;
  display: flex;
  flex-direction: column;
  align-items: center;
  width: 12px;
  background: #f1f1f1;
`;
const PageRail = styled.div`
  flex: 1;
  display: grid;
  grid-template-rows: 112fr 174fr 320fr;
  width: 10px;
`;
const PageThumb = styled.i`
  grid-row: 2;
  background: #c1c1c1;
`;
const Shelf = styled.footer`
  flex: none;
  display: flex;
  align-items: center;
  gap: 9px;
  height: 35px;
  padding: 0 9px 0 18px;
  border-top: 1px solid #d0d3d6;
  color: #4a4d50;
`;
const ShowAll = styled.button`
  margin-left: auto;
  height: 23px;
  padding: 0 9px;
  border: 1px solid #dadce0;
  border-radius: 3px;
`;
const DragGhost = styled.figure`
  position: absolute;
  left: 223px;
  top: 282px;
  display: grid;
  place-items: center;
  width: 75px;
  height: 74px;
  margin: 0;
  border: 1px solid #bfe3f5;
  border-radius: 2px;
  background: linear-gradient(#f2fbff, #dff2fd);
  box-shadow: 1px 2px 3px rgba(0,0,0,.4);
`;
const GhostCount = styled.figcaption`
  position: absolute;
  left: 29px;
  top: 30px;
  padding: 0 3px;
  border: 1px solid #fff;
  border-radius: 2px;
  background: linear-gradient(#1b3f96, #2f7fe0);
  color: #fff;
  font-weight: 600;
  line-height: 10px;
`;
const MoveTip = styled.div`
  position: absolute;
  left: 268px;
  top: 357px;
  display: flex;
  align-items: center;
  gap: 3px;
  height: 14px;
  padding: 0 4px 0 3px;
  border: 1px solid #767676;
  border-radius: 2px;
  background: linear-gradient(#fff, #e7eaf4);
  color: #10339c;
`;

const tabs = [
  [<FaGithub size={12} key="g" color="#24292e" />, "Upload files · Perfectfire33/ebay_"],
  [<Icon n="ebayblack" key="b" s={12} />, "My eBay All Selling"],
  [<Icon n="ebay" key="c" s={12} />, "My eBay: Messages"],
  [<Icon n="gdrive" key="d" s={12} />, "My Drive - Google Drive"],
  [<Icon n="drawing" key="e" s={12} />, "Copy of full_circle - Google Draw"],
];
const marks = [
  [<Icon n="apps9" />, "Apps"], [<Icon n="google" />], [<Icon n="youtube" />, "(6) Oregon Trail II..."], [<Icon n="gold" />],
  [<FaFacebook size={11} color="#1877f2" />], [<FaLinkedin size={11} color="#0a66c2" />],
  [<TileBox $bg="#ff4500" $r={6}><FaRedditAlien size={8} /></TileBox>], [<Icon n="youtube" />],
  [<Icon n="gmail" />, "[0]PfireIII"], [<Icon n="gmail" />, "[1]MTU"], [<Icon n="gmail" />, "[2]"], [<Icon n="gmail" />, "[3]"], [<Icon n="gmail" />, "[4]"], [<Icon n="gmail" />, "[5]"],
  [<Icon n="bookfolder" />, "BudgetGaming"], [<Icon n="bookfolder" />, "Crypto"], [<FaCrown size={11} color="#fbb400" />],
  [<TileBox $bg="#111" $fg="#f26522" $f={7}>wu</TileBox>], [<FaPaypal size={10} color="#003087" />], [<TileBox $bg="repeating-linear-gradient(90deg, #0d7a1c 0 1px, #052f0a 1px 2px)" $r={5} />],
  [<TileBox $bg="transparent" $fg="#3c1053" $f={14}>a</TileBox>], [<Icon n="flag" />], [<TileBox $bg="#15406f" $fg="#8fc0ea">D</TileBox>], [<Icon n="seven" />],
  [<TileBox $bg="#1652f0">C</TileBox>], [<Icon n="diamond" />], [<TileBox $bg="#1f4fa3" $r={2}>G</TileBox>], [<TileBox $bg="#f26522" $r={2}>N</TileBox>],
  [<TileBox $bg="transparent" $fg="#d81f26" $f={12}>N</TileBox>], [<FaGlobe size={11} color="#55595d" />, "eBay"], [<FaPeace size={11} color="#5a189a" />],
  [<Icon n="bookfolder" />, "[Main]"], [<Icon n="ebay" />, "Manage active list"],
];
const uploads = ["Best Illuminati Rap Song.mp3", "New Text Document (3).txt", "New Text Document (4).txt", "New Text Document (5).txt", "New Text Document.txt", "processItemEnd.png", "thouighttofindwalmartringsonconcretepavement.png", "ebay.png", "literalmonstersX.png", "New Text Document (2).txt", "/ANGX/MSG/adasdas.txt", "/ANGX/MSG/IMG957508.jpg", "/ANGX/MSG/IMG957538.jpg", "/ANGX/MSG/IMG_20150319_005305.jpg", "/ANGX/MSG/IMG_20150319_005305_2.jpg", "/ANGX/MSG/IMG_20150319_005305~2.jpg"];

const DocIcon = ({ w, h, children }) => (
  <svg width={w} height={h} viewBox="0 0 24 28" preserveAspectRatio="none" fill="none" stroke="#767676" strokeWidth="1.600" aria-hidden="true">
    <path d="M1 1h15l7 7v19H1z" />{children}
  </svg>
);

const middleTasks = [["chrome", "Google..."], ["note", "Sticky No..."], ["discord", "Discord"], ["gem", "PeerBloc..."], ["ame", "Adobe M..."], ["firefox", "Voice - ..."], ["vm", "Win Sma..."], ["monitor", "Windows..."], ["pr", "Adobe Pr..."], ["folder", "YouTube..."]];
const taskArt = {
  discord: <TileBox $s={18} $bg="#6f80c9" $r={3}><FaDiscord size={13} /></TileBox>,
  firefox: <FaFirefoxBrowser size={20} color="#ff8a1c" />,
  ame: <TileBox $s={18} $bg="#cdbdf0" $fg="#1e0a4a"><Svg w={14} h={14}><path d="M1 1h14v14H1z" fill="none" stroke="#2a0f66" strokeWidth="2" /><path d="M4 4l8 8M6 3l7 6M3 6l6 6" stroke="#2a0f66" /></Svg></TileBox>,
  pr: <TileBox $s={18} $bg="#1c0527" $fg="#e08cff" $f={10}>Pr</TileBox>,
};
const rightTasks = [["winamp", "1. WAL-M..."], ["drive", "FileShare (T:)"], ["note", "Untitled - ..."], ["chrome", "Czech Rep..."], ["chrome", "The 144000..."], ["chrome", "How long ..."], ["chrome", "2-Week E..."], ["folder", "!CurrentXIII"], ["drive", "RAPID (A:)"], ["chrome", "Strikethrou..."]];

/* ---------- winamp ---------- */

const Amp = styled.article`
  position: absolute;
  left: 249px;
  right: 47px;
  bottom: 28px;
  display: flex;
  flex-direction: column;
  height: 84px;
  border: 1px solid #000;
  border-bottom: 0;
  background: #2b3038;
  color: #d3d7da;
`;
const AmpTitle = styled.header`
  flex: none;
  display: flex;
  align-items: center;
  gap: 9px;
  height: 13px;
  padding: 0 3px;
  border-bottom: 1px solid #000;
  background: linear-gradient(#8b8b96, #4b4c59 50%, #32343f 55%, #3c3e4a);
  strong { font-weight: 700; color: #e4e6ea; }
`;
const AmpBody = styled.div`
  flex: 1;
  min-height: 0;
  display: flex;
  gap: 6px;
  padding: 3px 4px 4px;
`;
const AmpPlayer = styled.section`
  flex: none;
  width: 213px;
  display: flex;
  flex-direction: column;
`;
const Lcd = styled.div`
  display: flex;
  flex-direction: column;
  align-items: ${(p) => (p.$start ? "flex-start" : "flex-end")};
  flex: none;
  height: ${(p) => p.$h}px;
  width: ${(p) => p.$w || "100%"};
  padding: 1px 2px 0 10px;
  background: #060809;
  color: #9fb9c6;
  line-height: 12px;
  white-space: nowrap;
  small { font-size: 7px; line-height: 9px; margin-right: 33px; }
`;
const AmpRow = styled.div`
  display: flex;
  align-items: center;
  gap: ${(p) => p.$gap || 0}px;
`;
const Slider = styled.input.attrs({ type: "range" })`
  appearance: none;
  width: ${(p) => p.$w}px;
  height: 9px;
  background: linear-gradient(#9fb2bb, #6b7b83) center / 100% 2px no-repeat;
  &::-webkit-slider-thumb { appearance: none; width: 11px; height: 9px; border-radius: 2px; background: linear-gradient(#f1f1f1, #a9a9a9); }
`;
const Seek = styled.div`
  height: 3px;
  margin: 4px 0 9px;
  background: #000;
  border-bottom: 1px solid #4a4f57;
`;
const Key = styled.button`
  display: grid;
  place-items: center;
  height: ${(p) => (p.$small ? 11 : 13)}px;
  min-width: ${(p) => p.$w || 15}px;
  padding: 0 2px;
  border-right: 1px solid #555;
  background: linear-gradient(#eee, #a8aaad 60%, #8d8f93);
  color: #2f3338;
  font-size: 7px;
  line-height: 9px;
`;
const AmpPanel = styled.section`
  flex: ${(p) => (p.$w ? "none" : 1)};
  width: ${(p) => (p.$w ? p.$w + "px" : "auto")};
  display: flex;
  flex-direction: column;
  justify-content: space-between;
  background: #0b0c0e;
`;
const TrackLine = styled.p`
  && { font-size: 9px; }
  display: flex;
  justify-content: space-between;
  padding: 2px 12px 0 2px;
  white-space: nowrap;
  color: #e3d9c4;
`;
const eq = [12, 7, 21, 17, 11, 11, 11, 5, 5, 6, 4];

function Winamp() {
  return (
    <Amp>
      <AmpTitle>
        <TileBox $bg="#d9822b" $r={1}>~</TileBox><strong>WINAMP</strong>
        {["File", "Play", "Options", "View", "Help"].map((m) => <button key={m}>{m}</button>)}
        <Spring />
        <AmpRow $gap={3}>
          {["▁", "□", "T"].map((m) => <TileBox key={m} $bg="#6c6e79" $r={1} $f={7}>{m}</TileBox>)}
          <TileBox $bg="#d9822b" $r={1}>x</TileBox>
        </AmpRow>
      </AmpTitle>
      <AmpBody>
        <AmpPlayer>
          <Lcd $h={22}>
            <span>IDED - Conspiracy Becomes Reality -- (4:29)</span>
            <small>■ 256 KBPS 48 KHZ</small>
          </Lcd>
          <AmpRow $gap={8}>
            <Lcd $h={16} $w="127px" $start><Svg w={52} h={10} vb="0 0 52 10"><path d="M0 3.500h52" stroke="#8aa2ad" /></Svg></Lcd>
            <Key $small aria-label="Mute"><FaVolumeUp size={7} /></Key>
            <Slider $w={54} aria-label="Volume" defaultValue={100} />
          </AmpRow>
          <Seek />
          <AmpRow>
            {["M3 3v10M13 3L5 8l8 5z", "M4 2l9 6-9 6z", "M5 3v10M11 3v10", "M4 4h8v8H4z", "M13 3v10M3 3l8 5-8 5z"].map((d, i) => (
              <Key key={i} aria-label={["Previous", "Play", "Pause", "Stop", "Next"][i]}><Svg w={8} h={8}><path d={d} fill="#444" stroke="#444" strokeWidth="2" /></Svg></Key>
            ))}
            <Spring />
            <AmpRow $gap={5}><Key $small>▲</Key><AmpRow><Key $small $w={20}>◎</Key><Key $small $w={17}>⮌</Key></AmpRow><Icon n="winamp" s={15} /></AmpRow>
          </AmpRow>
        </AmpPlayer>
        <AmpPanel $w={133}>
          <svg width="133" height="54" viewBox="0 0 133 54" aria-hidden="true">
            <rect x="1" y="2" width="16" height="9" rx="1" fill="#c9cbce" /><path d="M4 6.500h9M10 4l3 2.500-3 2.500" stroke="#333" fill="none" />
            <rect x="19" y="2" width="8" height="9" fill="#55595f" /><rect x="41" y="2" width="8" height="9" fill="#55595f" />
            <text x="32" y="9" fontSize="7" fill="#8a949b">0</text><text x="62" y="9" fontSize="7" fill="#8a949b">L</text><text x="124" y="9" fontSize="7" fill="#8a949b">R</text>
            <path d="M69 6.500h52" stroke="#3c4046" /><rect x="89" y="2" width="11" height="8" rx="2" fill="#ddd" />
            <text x="10" y="20" fontSize="6" fill="#656b70">+12</text><text x="12" y="33" fontSize="6" fill="#656b70">+0</text><text x="10" y="46" fontSize="6" fill="#656b70">-12</text>
            {eq.map((y, i) => {
              const x = i ? 12 + i * 11.300 : 6;
              return <g key={i}><path d={`M${x} 13v33`} stroke="#33373c" /><rect x={x - 2} y={y + 12} width="4" height="12" rx="1.500" fill="#d6d8da" /></g>;
            })}
            {["PRE", "70", "180", "320", "600", "1K", "3K", "6K", "12K", "14K", "16K"].map((t, i) => (
              <text key={t} x={i ? 12 + i * 11.300 : 6} y="53" textAnchor="middle" fontSize="5" fill="#8b9297">{t}</text>
            ))}
          </svg>
          <AmpRow><Key $small>ON</Key><Key $small $w={24}>AUTO</Key><Key $small $w={32}>PRESETS</Key><Spring /><Key $small>⚲</Key><Key $small>⇥</Key><Key $small>≡</Key></AmpRow>
        </AmpPanel>
        <AmpPanel>
          <TrackLine><span>1. WAL-MART&nbsp;&nbsp; MARTial LAW Caught RED HANDED -...</span><span>4:29</span></TrackLine>
          <AmpRow>
            {["+", "−", "▤", "MISC", "≡"].map((k) => <Key key={k} $small>{k}</Key>)}
            <Spring /><small>0:00/4:29</small><Spring /><Key $small>◇</Key>
          </AmpRow>
        </AmpPanel>
      </AmpBody>
    </Amp>
  );
}

/* ---------- screens ---------- */

const BigNote = ({ mp3 }) => mp3 ? (
  <Svg w={25} h={31} vb="0 0 26 32" preserveAspectRatio="none"><path d="M1 1h18l6 6v24H1z" fill="#bfe0f8" stroke="#2878c0" strokeWidth="1.400" /><path d="M19 1v6h6z" fill="#2f84cf" /><path d="M14 13l7 4-3 3 2 4-8 6 2-6-6-2z" fill="#fff" stroke="#222" /><path d="M17 13l-6 8h4l-4 8 9-10h-4z" fill="#f7941d" stroke="#b65b06" /></Svg>
) : (
  <Svg w={22} h={29} vb="0 0 22 29"><path d="M1 1h15l5 6v21H1z" fill="#eef1f3" stroke="#a2a9b0" /><path d="M3 8h16M3 11h16M3 14h16M3 17h16M3 20h16M3 23h16" stroke="#b7cad8" /><path d="M16 1v6h5z" fill="#cfd5da" stroke="#8d959c" /></Svg>
);

function LeftScreen() {
  return (
    <Screen $ratio="16 / 9">
      <Explorer inset="153px 18px 132px 565px" path={["Computer", "Local Disk (C:)", "New folder (2)"]} search="Search New folder (2)" selected="Local Disk (C:)"
        tools={[["Organize", true], ["Open", true, "note"], ["Print"], ["New folder"]]}
        footer={<Details $gap={16}><BigNote /><DetailText><strong>New Text Document</strong><span>Text Document</span></DetailText></Details>} />
      <Frame $inset="313px 84px 180px 720px" $pale><TitleBar><WindowButtons /></TitleBar></Frame>
      <Frame $inset="331px 67px 160px 740px" $pale><TitleBar><WindowButtons /></TitleBar></Frame>
      <Explorer inset="1px 120px 29px 687px" path={["Computer", "Storage 1TB (G:)", "[MTU]Google Drive", "~[2017 ORGZ]~_"]} search="Search ~[2017 ORGZ]~_" selected="Storage 1TB (G:)"
        tools={[["Organize", true], ["Open", false, "library"], ["Include in library", true], ["Share with", true], ["Slide show"], ["New folder"]]}
        footer={
          <Details $gap={15}>
            <Svg w={25} h={31} vb="0 0 26 32"><path d="M8 4l14 2v24l-10 1z" fill="#e0bd52" /><path d="M12 5l6 1v23l-5 1z" fill="#9aa3a8" /><path d="M2 1l9 3v27L3 27z" fill="#f7e399" stroke="#cda83f" /></Svg>
            <DetailText><DetailLine $gap={17}><strong>ANGX</strong><span>Date modified: <em>6/13/2020 10:28 AM</em></span></DetailLine><span>File folder</span></DetailText>
          </Details>
        }>
        <FileTable cols="353px 114px 86px 56px 62px" span={669} heads={["Name", "Date", "Type", "Size", "Tags"]} rows={orgRows} rightCol={9} scroll={<Scroll h="148px" />} />
      </Explorer>
      <Explorer inset="349px 49px 88px 758px" pale path={["Computer", "RAPID (A:)", "Adobe Projects"]} search="Search Adobe Projects" selected="RAPID (A:)" treeScroll="366px"
        tools={[["Organize", true], ["Open", false, "picture"], ["Slide show"], ["Print"], ["New folder"]]}
        footer={
          <Details $gap={13}>
            <Svg w={30} h={31} vb="0 0 30 32"><path d="M6 0h16l5 6v20H6z" fill="#3a1240" /><path d="M2 4h6V1h13" stroke="#d76bf0" strokeWidth="3" fill="none" /><path d="M1 3l5-1v29l-5-6z" fill="#1c1c22" /><rect x="5" y="3" width="18" height="28" fill="#b9c2cf" /><path d="M8 3l8 6 2 12 4 7V3z" fill="#4e5663" /><rect x="22" y="10" width="7" height="20" fill="#a3b2c6" stroke="#111" /></Svg>
            <DetailText><em>69 items selected</em><a href="#details">Show more details...</a></DetailText>
          </Details>
        }>
        <FileTable cols="253px 85px 57px 83px" span={478} scrolled heads={["Name", "Type", "Size", "Date modified"]} rows={adobeRows} rightCol={2} scroll={<Scroll at="137px" h="24px" />} />
      </Explorer>
      <BuildNote>{"Windows 7\nBuild 7601"}</BuildNote>
      <TaskBar>
        <TaskButton $w={112}><Icon n="editor" s={18} /><span>fhcYouTubeCo...</span></TaskButton>
        <TaskButton $w={112}><Icon n="chrome" s={20} /><span>www.ebay.com...</span></TaskButton>
        <TaskButton $w={112}><Icon n="folder" s={20} /><span>Adobe Projects</span></TaskButton>
      </TaskBar>
    </Screen>
  );
}

function MiddleScreen() {
  return (
    <Screen $ratio="16 / 9" $drop={115} $bg="#fff">
      <Browser>
        <TabStrip>
          {tabs.map(([icon, label], i) => (
            <Tab key={label} $on={i === 0} $line={i > 0 && i < 4}>{icon}<button>{label}</button><button aria-label="Close tab"><Cross /></button></Tab>
          ))}
          <NewTab aria-label="New tab"><Svg w={9} h={9}><path d="M8 2v12M2 8h12" stroke="#3c4043" strokeWidth="2" /></Svg></NewTab>
          <CaptionHolder><WindowButtons red /></CaptionHolder>
        </TabStrip>
        <BrowserBar>
          {[["M14 8H3M8 3L3 8l5 5", "#5f6368", "Back"], ["M2 8h11M8 3l5 5-5 5", "#bdc1c6", "Forward"], ["M13 5a6 6 0 1 0 .8 4.500M14 1v5H9", "#5f6368", "Reload"], ["M3 8v7h10V8M1 9l7-7 7 7", "#5f6368", "Home"]].map(([d, c, l]) => (
            <Ext key={l} aria-label={l}><Svg><path d={d} fill="none" stroke={c} strokeWidth="2" /></Svg></Ext>
          ))}
          <Omnibox>
            <Svg w={9} h={9}><path d="M3 7h10v8H3zM5 7V4.500a3 3 0 0 1 6 0V7" fill="#5f6368" stroke="#5f6368" /></Svg>
            <input aria-label="Address" defaultValue="github.com/Perfectfire33/ebay_api/upload/ebay_api_framework" />
            <Svg w={10} h={10}><path d="M8 1.500l2 4.600 4.900.4-3.700 3.200 1.100 4.800L8 12l-4.300 2.500 1.100-4.800L1.100 6.500l4.900-.4z" fill="none" stroke="#5f6368" strokeWidth="1.400" /></Svg>
          </Omnibox>
          <Ext aria-label="Checker"><TileBox $bg="#4ca83c" $r={1}>✓</TileBox><Count $bg="#c8102e">1</Count></Ext>
          <Ext aria-label="Blocker"><TileBox $bg="#12a5f4" /><Count $wide $bg="#7b3a05">218</Count></Ext>
          <Ext aria-label="Video"><Svg><path d="M2 2l6 7 6-7-4 13H7z" fill="#2b86c7" /></Svg></Ext>
          <Ext aria-label="Pocket"><FaGetPocket size={11} color="#7d7d7d" /></Ext>
          <Ext aria-label="Drive"><Svg><path d="M8 1l6 13H2z" fill="#7d7d7d" /></Svg></Ext>
          <Divider />
          <Profile><TileBox $s={14} $bg="radial-gradient(circle at 50% 45%, #e9b79c 28%, #5a2318 32%)" $r={7} />Paused</Profile>
          <Svg w={4} h={11} vb="0 0 4 16"><path d="M2 2v.1M2 8v.1M2 14v.1" stroke="#5f6368" strokeWidth="3" strokeLinecap="round" /></Svg>
        </BrowserBar>
        <Bookmarks>
          {marks.map(([icon, label], i) => <Mark key={i} href="#bookmark" aria-label={label || "Bookmark"}>{icon}{label}</Mark>)}
          <Mark as="button" $push>»</Mark><Divider />
          <Mark href="#other"><Icon n="bookfolder" />Other bookmarks</Mark>
        </Bookmarks>
        <Page>
          <Column>
            <Uploader>
              <DropArea>
                <DropIcons>
                  <DocIcon w={18} h={20}><path d="M10 2v10M10 14l-2 8h5l-2-8" strokeDasharray="2 1" /></DocIcon>
                  <DocIcon w={26} h={30}><path d="M5 5v18h14M9 7v13M13 11v9M17 14v6" /></DocIcon>
                  <DocIcon w={32} h={37}><path d="M9 11l-4 5 4 5M15 11l4 5-4 5" strokeWidth="2" /></DocIcon>
                  <DocIcon w={26} h={30}><path d="M5 7h8M5 12h14M5 15h14M5 18.500h14M5 22h14" /></DocIcon>
                  <DocIcon w={18} h={20}><path d="M10 3c3 8 6 15 12 14-6-3-12 0-20 8C8 20 13 8 10 3z" /></DocIcon>
                </DropIcons>
                <DropTitle>Drag additional files here to add them to your repository</DropTitle>
                <DropHint>Or <a href="#choose">choose your files</a></DropHint>
              </DropArea>
              <Progress><strong>Uploading 25 of 69 files</strong>CryptoSystem_4.png</Progress>
              <ul>
                {uploads.map((f, i) => (
                  <FileRow key={f}>
                    <svg width="9" height="12" viewBox="0 0 12 16" fill="none" stroke="#6a86a8" strokeWidth="1.500" aria-hidden="true"><path d="M1 1h6l4 4v10H1zM7 1v4h4" /></svg>
                    <Picked $on={i === 8 || i === 9}>{f}</Picked>
                    <button aria-label={"Remove " + f}><Cross s={8} c="#7c7c7c" w={2.4} /></button>
                  </FileRow>
                ))}
              </ul>
            </Uploader>
          </Column>
          <PageTrack>
            <TrackEnd><UpTri /></TrackEnd>
            <PageRail><PageThumb /></PageRail>
            <TrackEnd><DownTri /></TrackEnd>
          </PageTrack>
        </Page>
        <Shelf>
          <Icon n="chrome" /><button>Upload files · Perf....html</button><Svg w={8} h={8}><path d="M3 11l5-5 5 5" fill="none" stroke="#5f6368" strokeWidth="2" /></Svg>
          <ShowAll>Show all</ShowAll><button aria-label="Close downloads"><Cross s={9} c="#5f6368" w={1.8} /></button>
        </Shelf>
      </Browser>
      <DragGhost>
        <svg width="64" height="60" viewBox="0 0 64 60" aria-hidden="true">
          <rect x="1" y="6" width="60" height="50" fill="#d8d2cf" stroke="#333" /><path d="M2 12h14v36H2z" fill="#b7c7dc" /><path d="M5 15c5 6 9 12 4 24" stroke="#c06a5a" strokeWidth="4" fill="none" />
          <path d="M16 2h31l12 12v45H16z" fill="#56316a" /><path d="M47 2v12h12z" fill="#d77cf0" /><rect x="3" y="5" width="40" height="15" fill="#dd7cf5" />
          <text x="8" y="17" fontSize="12" fontWeight="700" fill="#4a2560">PROJ</text><text x="24" y="51" fontSize="22" fontWeight="700" fill="#dd7cf5">Pr</text>
        </svg>
        <GhostCount>69</GhostCount>
      </DragGhost>
      <MoveTip><Svg w={8} h={8}><path d="M1 6h6V2l8 6-8 6v-4H1z" fill="#1565c0" /></Svg>Move</MoveTip>
      <TaskBar $bg="linear-gradient(90deg, #4d6d7c, #46535e 20%, #3f4a54 65%, #7390a6 72%, #5a7488 85%, #33586a)">
        <StartButton aria-label="Start"><Icon n="orb" s={25} /></StartButton>
        <TaskButton $w={38}><Icon n="computer" s={14} /></TaskButton>
        {middleTasks.map(([icon, label]) => (
          <TaskButton key={label} $w={79} $dark>{taskArt[icon] || <Icon n={icon} s={20} />}<span>{label}</span></TaskButton>
        ))}
        <Tray>
          <span>Desktop</span><span>»</span>
          <FaDiscord size={11} /><FaBluetoothB size={11} color="#4aa3ff" /><FaWindows size={10} /><FaSteamSymbol size={11} /><TileBox $bg="#c61f1f" $f={5}>APM</TileBox>
          {["#9aa", "#d33", "#3b82c4", "#4caf50", "#e0a63a", "#888", "#5c9bd6", "#c44", "#7a5cc4", "#ddd", "#46b8a0", "#e5e5e5"].map((c, i) => <TileBox key={i} $bg={c} $r={i % 2 ? 6 : 1} />)}
          <FaVolumeUp size={10} />
          <Clock>{"12:00 AM\n6/14/2020"}</Clock>
        </Tray>
        <ShowDesktop aria-label="Show desktop" />
      </TaskBar>
    </Screen>
  );
}

function RightScreen() {
  return (
    <Screen $ratio="5 / 4" $drop={155}>
      <Explorer inset="20px 49px 138px 53px" leaf path={["Computer", "Storage 1TB (G:)", "Music", "!CurrentXIII"]} search="Search !CurrentXIII" sidebar={153} treeScroll="391px" selected="Storage 1TB (G:)"
        tools={[["Organize", true], ["Play in Winamp", true, "winamp"], ["Play all"], ["New folder"]]}
        footer={
          <Details $gap={13}>
            <BigNote mp3 />
            <DetailText><strong>Best Illuminati Rap Song.mp3</strong><span>MPEG Layer 3 Audio File</span></DetailText>
            <Facts>
              <dt>Contributing artists:</dt><dd>Specify contributing art...</dd><dt>Genre:</dt><dd>Other</dd><dt>Rating:</dt><Stars>☆☆☆☆☆</Stars><dt>Size:</dt><dd>9.21 MB</dd>
              <dt>Album:</dt><dd>Specify album</dd><dt>Length:</dt><dd>00:05:01</dd><dt>Year:</dt><dd>Specify the year this me...</dd>
            </Facts>
          </Details>
        }>
        <FileTable cols="239px 28px 114px 128px 97px" span={603} heads={["Name", "#", "Title", "Contributing artists", "Album"]} rows={musicRows} rightCol={9} scroll={<Scroll h="82px" />} />
      </Explorer>
      <Winamp />
      <BuildNote>{"Windows 7\nBuild 7601"}</BuildNote>
      <TaskBar $end={15}>
        {rightTasks.map(([icon, label]) => <TaskButton key={label}><Icon n={icon} s={20} /><span>{label}</span></TaskButton>)}
      </TaskBar>
    </Screen>
  );
}

export default function App() {
  return (
    <>
      <Global />
      <Screens>
        <LeftScreen />
        <MiddleScreen />
        <RightScreen />
      </Screens>
    </>
  );
}
